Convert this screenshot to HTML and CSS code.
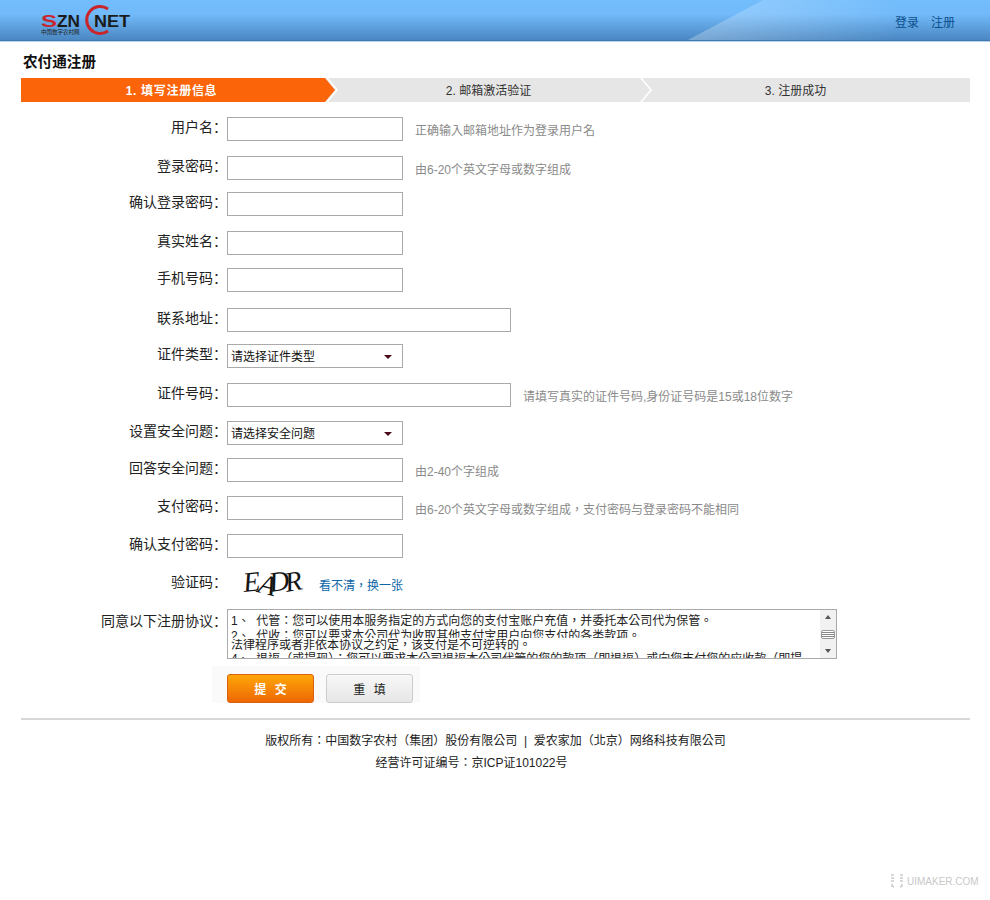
FILE: index.html
```html
<!DOCTYPE html>
<html>
<head>
  <meta charset="UTF-8" />
  <title>农付通注册</title>
  <link rel="stylesheet" href="styles.css">
</head>
<body>
  <div class="header">
    <svg class="logo" width="100" height="36" viewBox="0 0 100 36">
      <text x="1" y="24" class="logo-s" textLength="16" lengthAdjust="spacingAndGlyphs">S</text>
      <text x="17" y="24" class="logo-zn" textLength="23" lengthAdjust="spacingAndGlyphs">ZN</text>
      <path d="M68 6 A13.5 13.5 0 1 0 68 28" fill="none" stroke="#c9262c" stroke-width="3" />
      <text x="54" y="24" class="logo-zn" textLength="36" lengthAdjust="spacingAndGlyphs">NET</text>
      <text x="1" y="30.5" class="logo-small">中国数字农村网</text>
    </svg>
    <div class="header-links">
      <a href="#">登录</a>
      <a href="#">注册</a>
    </div>
  </div>

  <h1>农付通注册</h1>

  <div class="steps">
    <div class="step step-on">1. 填写注册信息</div>
    <div class="step step-mid">2. 邮箱激活验证</div>
    <div class="step step-last">3. 注册成功</div>
  </div>

  <div class="form">
    <div class="row r39">
      <label>用户名：</label>
      <input type="text" />
      <span class="hint">正确输入邮箱地址作为登录用户名</span>
    </div>
    <div class="row r36">
      <label>登录密码：</label>
      <input type="text" />
      <span class="hint">由6-20个英文字母或数字组成</span>
    </div>
    <div class="row r39">
      <label>确认登录密码：</label>
      <input type="text" />
    </div>
    <div class="row r37">
      <label>真实姓名：</label>
      <input type="text" />
    </div>
    <div class="row r40">
      <label>手机号码：</label>
      <input type="text" />
    </div>
    <div class="row r36">
      <label>联系地址：</label>
      <input type="text" class="long" />
    </div>
    <div class="row r39">
      <label>证件类型：</label>
      <div class="select-box">请选择证件类型</div>
    </div>
    <div class="row r38">
      <label>证件号码：</label>
      <input type="text" class="long" />
      <span class="hint">请填写真实的证件号码,身份证号码是15或18位数字</span>
    </div>
    <div class="row r37">
      <label>设置安全问题：</label>
      <div class="select-box">请选择安全问题</div>
    </div>
    <div class="row r38">
      <label>回答安全问题：</label>
      <input type="text" />
      <span class="hint">由2-40个字组成</span>
    </div>
    <div class="row r38">
      <label>支付密码：</label>
      <input type="text" />
      <span class="hint">由6-20个英文字母或数字组成，支付密码与登录密码不能相同</span>
    </div>
    <div class="row r38">
      <label>确认支付密码：</label>
      <input type="text" />
    </div>
    <div class="row r37">
      <label>验证码：</label>
      <svg class="captcha" width="64" height="26" viewBox="0 0 64 26">
        <text x="1" y="21" rotate="-6 14 -8 -10">EADR</text>
      </svg>
      <a href="#" class="change">看不清，换一张</a>
    </div>
    <div class="row row-top">
      <label>同意以下注册协议：</label>
      <div class="agreement">
        <div class="agreement-text">
          <div class="line line-1">1、&nbsp;&nbsp;代管：您可以使用本服务指定的方式向您的支付宝账户充值，并委托本公司代为保管。</div>
          <div class="line line-2">2、&nbsp;&nbsp;代收：您可以要求本公司代为收取其他支付宝用户向您支付的各类款项。</div>
          <div class="line line-3">法律程序或者非依本协议之约定，该支付是不可逆转的。</div>
          <div class="line line-4">4、&nbsp;&nbsp;退返（或提现）：您可以要求本公司退返本公司代管的您的款项（即退返）或向您支付您的应收款（即提</div>
        </div>
        <div class="scrollbar">
          <span class="arrow-up"></span>
          <span class="thumb"></span>
          <span class="arrow-down"></span>
        </div>
      </div>
    </div>
    <div class="buttons">
      <button class="btn-submit">提 交</button>
      <button class="btn-reset">重 填</button>
    </div>
  </div>

  <div class="footer">
    <p>版权所有：中国数字农村（集团）股份有限公司 &nbsp;|&nbsp; 爱农家加（北京）网络科技有限公司</p>
    <p class="footer-icp">经营许可证编号：京ICP证101022号</p>
  </div>

  <div class="watermark">
    <svg width="14" height="14" viewBox="0 0 14 14">
      <path d="M1 1h3M1 4h3M1 7h3M2 10v2l2 1M10 1h3M10 4h3M10 7h3M12 10v2l-2 1" fill="none" stroke="#ccc" stroke-width="1.6" />
    </svg>
    <span>UIMAKER.COM</span>
  </div>
</body>
</html>
```

FILE: styles.css
```css
html, body { margin: 0; padding: 0; }
body { font-family: "Liberation Sans", "Noto Sans CJK SC", sans-serif; font-size: 12px; color: #222; background: #fff; min-height: 900px; position: relative; overflow: hidden; }
a { text-decoration: none; }

.header { height: 40px; border-bottom: 1px solid #3f78ae; box-shadow: 0 1px 0 #b9d3ea; background: linear-gradient(#72bdfc, #72bafa 35%, #4a87c2); display: flex; justify-content: space-between; position: relative; }
.header::before { content: ""; position: absolute; top: 0; right: 0; bottom: 0; width: 302px; background: linear-gradient(100deg, rgba(255,255,255,0.28), rgba(255,255,255,0) 70%); clip-path: polygon(75px 0, 100% 0, 100% 100%, 0 100%); }
.logo { margin: 3px 0 0 40px; flex: none; }
.logo text { font-family: "Liberation Sans", sans-serif; font-weight: bold; }
.logo-s { font-size: 16px; fill: #c9262c; }
.logo-zn { font-size: 16px; fill: #1b1b1b; }
.logo .logo-small { font-family: "Noto Sans CJK SC", sans-serif; font-size: 5.5px; font-weight: normal; fill: #222; }
.header-links { display: flex; gap: 12px; margin: 14px 35px 0 0; position: relative; }
.header-links a { color: #0b4f8c; font-family: "Noto Sans CJK SC", sans-serif; line-height: 16px; }

h1 { margin: 10px 0 0 23px; font-size: 14.6px; line-height: 20px; font-weight: bold; color: #111; font-family: "Noto Sans CJK SC", sans-serif; }

.steps { margin: 7px 20px 0 21px; height: 24px; display: flex; background: #e6e6e6; line-height: 27px; color: #333; }
.step { text-align: center; position: relative; }
.step-on { width: 314px; padding-right: 13px; box-sizing: border-box; background: #fb6408; color: #fff; font-weight: bold; letter-spacing: 0.7px; clip-path: polygon(0 0, 304px 0, 100% 50%, 304px 100%, 0 100%); }
.step-mid { width: 307px; }
.step-last { flex: 1; padding-right: 21px; }
.step-mid::before, .step-last::before { content: ""; position: absolute; top: 0; width: 12px; height: 24px; background: #fff; clip-path: polygon(0 0, 2px 0, 100% 50%, 2px 100%, 0 100%, 10px 50%); }
.step-mid::before { left: -9px; }
.step-last::before { left: -2px; }

.form { margin: 15px 0 0 21px; }
.row { display: flex; align-items: center; height: 24px; }
.r36 { margin-bottom: 12px; }
.r37 { margin-bottom: 13px; }
.r38 { margin-bottom: 14px; }
.r39 { margin-bottom: 15px; }
.r40 { margin-bottom: 16px; }
.row label { width: 206px; flex: none; margin-bottom: 7px; text-align: right; font-size: 14px; color: #222; font-family: "Noto Sans CJK SC", sans-serif; }
.row input { width: 176px; height: 24px; box-sizing: border-box; border: 1px solid #aaa; padding: 0 4px; background: #fff; flex: none; }
.row input.long { width: 284px; }
.hint { margin-left: 12px; color: #8a8a8a; font-family: "Liberation Sans", "Noto Sans CJK TC", sans-serif; }

.select-box { width: 176px; height: 24px; box-sizing: border-box; border: 1px solid #aaa; padding-left: 3px; line-height: 22px; color: #111; font-family: "Noto Sans CJK SC", sans-serif; position: relative; }
.select-box::after { content: ""; position: absolute; right: 10px; top: 10px; border: 4px solid transparent; border-top: 4px solid #4a0a18; border-bottom: 0; }

.captcha { margin-left: 16px; flex: none; }
.captcha text { font-family: "Liberation Serif", serif; font-style: italic; font-size: 28px; letter-spacing: -4px; fill: #151515; }
.change { margin-left: 12px; color: #0d66a8; font-family: "Noto Sans CJK TC", sans-serif; }

.row-top { height: 50px; align-items: flex-start; }
.row-top label { line-height: 22px; margin-bottom: 0; }
.agreement { width: 610px; height: 50px; box-sizing: border-box; border: 1px solid #aaa; display: flex; overflow: hidden; }
.agreement-text { flex: 1; padding: 3px 0 0 3px; overflow: hidden; font-family: "Liberation Sans", "Noto Sans CJK TC", sans-serif; color: #222; white-space: nowrap; }
.line { overflow: hidden; }
.line-1 { height: 16px; line-height: 16px; }
.line-2 { height: 9px; line-height: 15px; }
.line-3 { height: 12px; line-height: 12px; margin: 1px 0; }
.line-4 { height: 14px; line-height: 15px; }
.scrollbar { width: 16px; flex: none; background: #f1f1f1; display: flex; flex-direction: column; align-items: center; justify-content: space-between; padding: 5px 0; box-sizing: border-box; }
.arrow-up { border: 3px solid transparent; border-bottom: 4px solid #555; border-top: 0; }
.arrow-down { border: 3px solid transparent; border-top: 4px solid #555; border-bottom: 0; }
.thumb { width: 14px; height: 9px; box-sizing: border-box; background: repeating-linear-gradient(#fff 0 1px, #888 1px 2px); border: 1px solid #999; border-radius: 2px; }

.buttons { width: 208px; height: 37px; margin: 7px 0 0 191px; box-sizing: border-box; padding: 8px 0 0 15px; background: #fafafa; display: flex; gap: 12px; }
.buttons button { width: 87px; height: 29px; border-radius: 3px; font-size: 12px; word-spacing: 6px; font-family: "Noto Sans CJK SC", sans-serif; padding: 0; }
.btn-submit { border: 1px solid #d9600c; background: linear-gradient(#fea708, #ee6704); color: #fff; font-weight: bold; }
.btn-reset { border: 1px solid #ccc; background: linear-gradient(#f8f8f8, #e6e6e6); color: #222; }

.footer { margin: 15px 20px 0 21px; border-top: 2px solid #d8d8d8; padding-top: 10px; text-align: center; font-family: "Liberation Sans", "Noto Sans CJK TC", sans-serif; color: #222; }
.footer p { margin: 0; line-height: 22px; }
.footer .footer-icp { padding-right: 48px; }

.watermark { position: absolute; left: 890px; top: 874px; display: flex; align-items: center; gap: 3px; color: #c8c8c8; font-family: "Liberation Sans", sans-serif; font-size: 10px; }
```
